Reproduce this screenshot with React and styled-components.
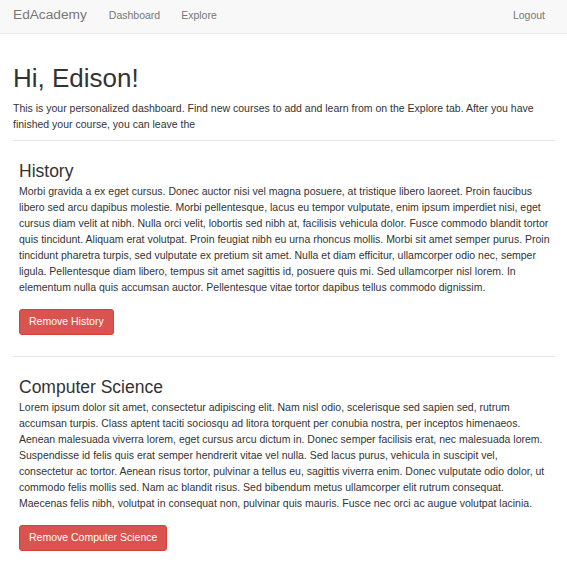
import React from "react";
import styled, { createGlobalStyle } from "styled-components";

const Global = createGlobalStyle`
  html, body { margin: 0; padding: 0; background: #fff; }
  body {
    font-family: "Liberation Sans", Arial, sans-serif;
    color: #333;
    font-size: 10.5px;
    line-height: 16px;
  }
  * { box-sizing: border-box; }
`;

const Navbar = styled.nav`
  height: 34px;
  background: #f8f8f8;
  border-bottom: 1px solid #e7e7e7;
  display: flex;
  align-items: center;
  padding: 0 22px 3px 13px;
`;

const Brand = styled.a`
  font-size: 13.7px;
  color: #777;
  text-decoration: none;
  margin-right: 22px;
`;

const NavLink = styled.a`
  font-size: 10.5px;
  color: #777;
  text-decoration: none;
  margin-right: ${(p) => (p.$last ? "0" : "21px")};
  margin-left: ${(p) => (p.$right ? "auto" : "0")};
`;

const Container = styled.main`
  padding: 0 12px 0 13px;
`;

const Title = styled.h1`
  font-size: 26px;
  font-weight: 500;
  line-height: 29px;
  margin: 30px 0 7px;
`;

const Intro = styled.p`
  margin: 0;
`;

const Divider = styled.hr`
  border: 0;
  border-top: 1px solid #e5e5e5;
  margin: ${(p) => p.$m || "8px 0 20px"};
`;

const Course = styled.section`
  padding: 0 3px 0 6px;
`;

const CourseTitle = styled.h3`
  font-size: 17.5px;
  font-weight: 500;
  line-height: 20px;
  margin: 0 0 2px;
`;

const CourseText = styled.p`
  margin: 0 0 14px;
`;

const DangerButton = styled.button`
  display: inline-block;
  font-family: "Liberation Sans", Arial, sans-serif;
  font-size: 10.5px;
  line-height: 15px;
  padding: 4px 9px 5px;
  color: #fff;
  background: #d9534f;
  border: 1px solid #d43f3a;
  border-radius: 3px;
  cursor: pointer;
`;

const courses = [
  {
    name: "History",
    text:
      "Morbi gravida a ex eget cursus. Donec auctor nisi vel magna posuere, at tristique libero laoreet. Proin faucibus libero sed arcu dapibus molestie. Morbi pellentesque, lacus eu tempor vulputate, enim ipsum imperdiet nisi, eget cursus diam velit at nibh. Nulla orci velit, lobortis sed nibh at, facilisis vehicula dolor. Fusce commodo blandit tortor quis tincidunt. Aliquam erat volutpat. Proin feugiat nibh eu urna rhoncus mollis. Morbi sit amet semper purus. Proin tincidunt pharetra turpis, sed vulputate ex pretium sit amet. Nulla et diam efficitur, ullamcorper odio nec, semper ligula. Pellentesque diam libero, tempus sit amet sagittis id, posuere quis mi. Sed ullamcorper nisl lorem. In elementum nulla quis accumsan auctor. Pellentesque vitae tortor dapibus tellus commodo dignissim.",
  },
  {
    name: "Computer Science",
    text:
      "Lorem ipsum dolor sit amet, consectetur adipiscing elit. Nam nisl odio, scelerisque sed sapien sed, rutrum accumsan turpis. Class aptent taciti sociosqu ad litora torquent per conubia nostra, per inceptos himenaeos. Aenean malesuada viverra lorem, eget cursus arcu dictum in. Donec semper facilisis erat, nec malesuada lorem. Suspendisse id felis quis erat semper hendrerit vitae vel nulla. Sed lacus purus, vehicula in suscipit vel, consectetur ac tortor. Aenean risus tortor, pulvinar a tellus eu, sagittis viverra enim. Donec vulputate odio dolor, ut commodo felis mollis sed. Nam ac blandit risus. Sed bibendum metus ullamcorper elit rutrum consequat. Maecenas felis nibh, volutpat in consequat non, pulvinar quis mauris. Fusce nec orci ac augue volutpat lacinia.",
  },
];

export default function App() {
  return (
    <>
      <Global />
      <Navbar>
        <Brand href="#">EdAcademy</Brand>
        <NavLink href="#">Dashboard</NavLink>
        <NavLink href="#">Explore</NavLink>
        <NavLink href="#" $right $last>
          Logout
        </NavLink>
      </Navbar>
      <Container>
        <Title>Hi, Edison!</Title>
        <Intro>
          This is your personalized dashboard. Find new courses to add and learn
          from on the Explore tab. After you have finished your course, you can
          leave the
        </Intro>
        {courses.map((c, i) => (
          <React.Fragment key={c.name}>
            <Divider $m={i === 0 ? "8px 0 20px" : "21px 0 20px"} />
            <Course>
              <CourseTitle>{c.name}</CourseTitle>
              <CourseText>{c.text}</CourseText>
              <DangerButton>Remove {c.name}</DangerButton>
            </Course>
          </React.Fragment>
        ))}
      </Container>
    </>
  );
}
